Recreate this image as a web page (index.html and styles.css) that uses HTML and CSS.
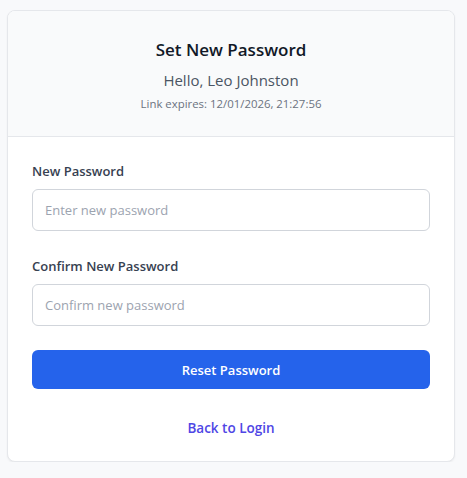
FILE: index.html
```html
<!DOCTYPE html>
<html lang="en">
<head>
<meta charset="utf-8">
<title>Set New Password</title>
<link rel="stylesheet" href="styles.css">
</head>
<body>
<div class="card">
  <div class="card-header">
    <h1 class="title">Set New Password</h1>
    <p class="greeting">Hello, Leo Johnston</p>
    <p class="expires">Link expires: 12/01/2026, 21:27:56</p>
  </div>
  <form class="card-body">
    <div class="field">
      <label class="label" for="pw">New Password</label>
      <input class="input" id="pw" type="password" placeholder="Enter new password">
    </div>
    <div class="field">
      <label class="label" for="pw2">Confirm New Password</label>
      <input class="input" id="pw2" type="password" placeholder="Confirm new password">
    </div>
    <button class="btn" type="button">Reset Password</button>
    <div class="back"><a class="back-link" href="#">Back to Login</a></div>
  </form>
</div>
</body>
</html>
```
FILE: styles.css
```css
* { box-sizing: border-box; }
html, body { margin: 0; padding: 0; }
body {
  background: #f8f9fb;
  font-family: "Open Sans", "Noto Sans", sans-serif;
  padding: 10px 12px 0 7px;
}
.card {
  width: 448px;
  background: #ffffff;
  border: 1px solid #e5e7eb;
  border-radius: 8px;
  box-shadow: 0 1px 2px rgba(0,0,0,0.06);
  overflow: hidden;
}
.card-header {
  background: #f9fafb;
  border-bottom: 1px solid #e5e7eb;
  padding: 25px 24px 24px;
  text-align: center;
}
.title {
  margin: 0;
  font-size: 17px;
  line-height: 28px;
  font-weight: 600;
  color: #111827;
}
.greeting {
  margin: 4px 0 0;
  font-size: 15px;
  line-height: 24px;
  color: #4b5563;
}
.expires {
  margin: 4px 0 0;
  font-size: 11.4px;
  line-height: 16px;
  color: #6b7280;
}
.card-body {
  padding: 24px 24px 23px;
  display: flex;
  flex-direction: column;
}
.field { display: flex; flex-direction: column; margin-bottom: 25px; }
.label {
  font-size: 13px;
  line-height: 20px;
  font-weight: 600;
  color: #374151;
  margin-bottom: 8px;
}
.input {
  height: 42px;
  border: 1px solid #d1d5db;
  border-radius: 6px;
  padding: 0 12px;
  font-family: inherit;
  font-size: 13px;
  color: #111827;
  background: #fff;
  outline: none;
}
.input::placeholder { color: #9ca3af; }
.btn {
  margin-top: -1px;
  height: 39px;
  border: none;
  border-radius: 6px;
  background: #2563eb;
  color: #fff;
  font-family: inherit;
  font-size: 13px;
  font-weight: 600;
}
.back {
  margin-top: 28px;
  text-align: center;
  line-height: 20px;
}
.back-link {
  font-size: 13.5px;
  font-weight: 600;
  color: #4f46e5;
  text-decoration: none;
}
```
